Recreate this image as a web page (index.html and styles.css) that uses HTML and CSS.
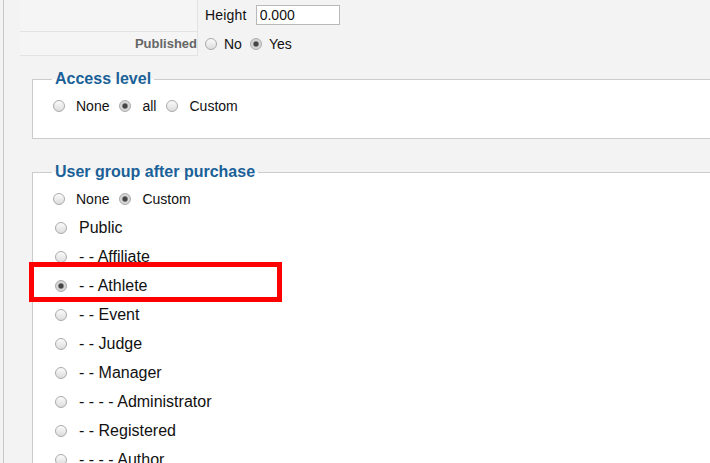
FILE: index.html
```html
<!DOCTYPE html>
<html lang="en">
  <head>
    <meta charset="UTF-8" />
    <meta name="viewport" content="width=device-width, initial-scale=1.0" />
    <title>Product options</title>
    <link rel="stylesheet" href="styles.css">
  </head>
  <body>
    <div class="page">
      <div class="params">
        <div class="param-row row-height">
          <div class="param-label"></div>
          <div class="param-value">
            <span class="text">Height</span>
            <input type="text" class="small-input" value="0.000" />
          </div>
        </div>
        <div class="param-row row-published">
          <div class="param-label">Published</div>
          <div class="param-value">
            <input type="radio" class="radio" name="published" />
            <label class="radio-label">No</label>
            <input type="radio" class="radio" name="published" checked />
            <label class="radio-label">Yes</label>
          </div>
        </div>
      </div>

      <fieldset class="box">
        <legend>Access level</legend>
        <div class="radio-row">
          <input type="radio" class="radio" name="access" />
          <label class="radio-label">None</label>
          <input type="radio" class="radio" name="access" checked />
          <label class="radio-label">all</label>
          <input type="radio" class="radio" name="access" />
          <label class="radio-label">Custom</label>
        </div>
      </fieldset>

      <fieldset class="box">
        <legend>User group after purchase</legend>
        <div class="radio-row">
          <input type="radio" class="radio" name="group-mode" />
          <label class="radio-label">None</label>
          <input type="radio" class="radio" name="group-mode" checked />
          <label class="radio-label">Custom</label>
        </div>
        <ul class="group-list">
          <li><input type="radio" class="radio" name="group" /><label>Public</label></li>
          <li><input type="radio" class="radio" name="group" /><label>- - Affiliate</label></li>
          <li class="marked">
            <input type="radio" class="radio" name="group" checked /><label>- - Athlete</label>
            <span class="highlight"></span>
          </li>
          <li><input type="radio" class="radio" name="group" /><label>- - Event</label></li>
          <li><input type="radio" class="radio" name="group" /><label>- - Judge</label></li>
          <li><input type="radio" class="radio" name="group" /><label>- - Manager</label></li>
          <li><input type="radio" class="radio" name="group" /><label>- - - - Administrator</label></li>
          <li><input type="radio" class="radio" name="group" /><label>- - Registered</label></li>
          <li><input type="radio" class="radio" name="group" /><label>- - - - Author</label></li>
        </ul>
      </fieldset>
    </div>
  </body>
</html>
```

FILE: styles.css
```css
* {
  box-sizing: border-box;
}

body {
  margin: 0;
  background: #f3f3f3;
  font-family: "Liberation Sans", Arial, sans-serif;
  color: #111;
  overflow: hidden;
}

.page {
  margin-left: 3px;
  border-left: 1px solid #c8c8c8;
  padding-left: 16px;
  height: 463px;
  overflow: hidden;
}

/* parameter table */
.param-row {
  display: grid;
  grid-template-columns: 178px 1fr;
}

.row-height {
  height: 32px;
}

.row-published {
  height: 24px;
}

.param-label {
  background: #f5f5f5;
  border-right: 1px solid #e3e3e3;
  border-bottom: 1px solid #e3e3e3;
  padding-right: 0;
  font-size: 13px;
  font-weight: bold;
  color: #666;
  display: flex;
  align-items: center;
  justify-content: flex-end;
}

.param-value {
  display: flex;
  align-items: center;
  padding-left: 7px;
  font-size: 14px;
}

.text {
  margin-right: 9px;
  letter-spacing: 0.2px;
}

.small-input {
  width: 84px;
  height: 20px;
  border: 1px solid #b9b9b9;
  background: white;
  font-family: inherit;
  font-size: 14px;
  padding: 0 3px;
  margin: 0;
  color: #111;
}

.row-height .param-value {
  padding-bottom: 2px;
}

/* radios */
.radio {
  appearance: none;
  -webkit-appearance: none;
  width: 12px;
  height: 12px;
  margin: 0 11px 0 0;
  border-radius: 50%;
  border: 1px solid #aaaaaa;
  background: linear-gradient(#fbfbfb, #dcdcdc);
  flex-shrink: 0;
}

.radio:checked {
  background: radial-gradient(circle, #444 0 2px, #888 2.6px, #d6d6d6 3.4px);
}

.radio-label {
  margin-right: 10px;
  font-size: 14px;
}

.row-published .radio {
  margin-right: 7px;
}

.row-published .radio-label {
  margin-right: 8px;
}

/* fieldsets */
.box {
  margin: 14px -40px 0 12px;
  border: 1px solid #cccccc;
  background: white;
  padding: 8px 0 22px 19px;
}

.box legend {
  padding: 0 3px;
  font-size: 16px;
  line-height: 18px;
  font-weight: bold;
  color: #1a6198;
}

.box + .box {
  margin-top: 24px;
}

.radio-row {
  display: flex;
  align-items: center;
  height: 20px;
  padding-left: 1px;
}

.group-list {
  list-style: none;
  margin: 4px 0 0;
  padding: 0;
}

.group-list li {
  display: flex;
  align-items: center;
  height: 29px;
  padding-left: 3px;
  font-size: 16px;
}

.group-list .radio {
  margin-right: 12px;
}

.marked {
  position: relative;
}

/* annotation box drawn over the row */
.highlight {
  position: absolute;
  left: -23px;
  top: -9px;
  width: 253px;
  height: 40px;
  border: 5px solid #f00;
}
```
